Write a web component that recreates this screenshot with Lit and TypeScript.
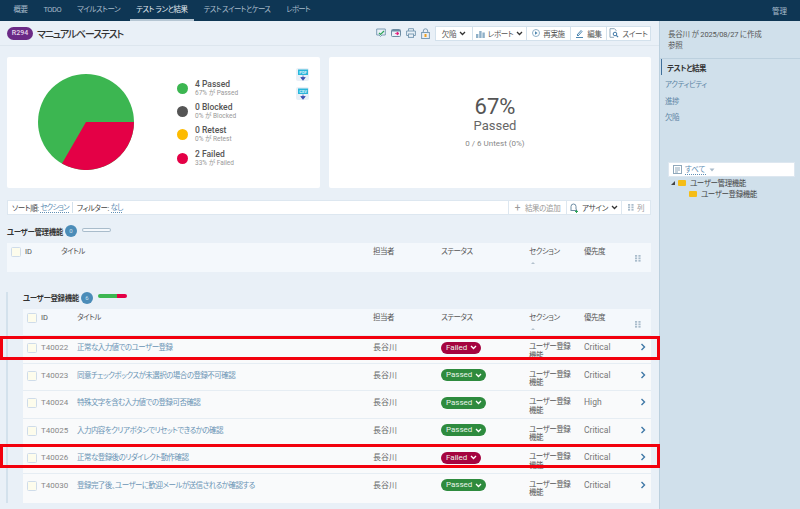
import { LitElement, css, html, svg } from "lit";
import { customElement } from "lit/decorators.js";

const TABS = ["概要", "TODO", "マイルストーン", "テスト ランと結果", "テスト スイートとケース", "レポート"];

const LEGEND = [
  { title: "4 Passed", sub: "67% が Passed", color: "#3cb651" },
  { title: "0 Blocked", sub: "0% が Blocked", color: "#555555" },
  { title: "0 Retest", sub: "0% が Retest", color: "#fdbb00" },
  { title: "2 Failed", sub: "33% が Failed", color: "#e40046" },
];

const ROWS = [
  { id: "T40022", title: "正常な入力値でのユーザー登録", status: "Failed", priority: "Critical" },
  { id: "T40023", title: "同意チェックボックスが未選択の場合の登録不可確認", status: "Passed", priority: "Critical" },
  { id: "T40024", title: "特殊文字を含む入力値での登録可否確認", status: "Passed", priority: "High" },
  { id: "T40025", title: "入力内容をクリアボタンでリセットできるかの確認", status: "Passed", priority: "Critical" },
  { id: "T40026", title: "正常な登録後のリダイレクト動作確認", status: "Failed", priority: "Critical" },
  { id: "T40030", title: "登録完了後、ユーザーに歓迎メールが送信されるか確認する", status: "Passed", priority: "Critical" },
];

const chevronDown = (color = "#333") => html`<svg class="chev" width="7" height="5" viewBox="0 0 7 5">
  <path d="M1 1l2.5 2.5L6 1" fill="none" stroke=${color} stroke-width="1.3" />
</svg>`;

const columnsIcon = svg`<rect x="0" y="0" width="2.5" height="2.5" /><rect x="4" y="0" width="2.5" height="2.5" />
  <rect x="0" y="3.5" width="2.5" height="2.5" /><rect x="4" y="3.5" width="2.5" height="2.5" />
  <rect x="0" y="7" width="2.5" height="2.5" /><rect x="4" y="7" width="2.5" height="2.5" />`;

const exportIcon = (label: string) => html`<div class="export">
  <svg width="14" height="14" viewBox="0 0 14 14">
    <rect x="2" y="1.5" width="10" height="5.5" fill="#2bb6da" />
    <text x="7" y="5.8" font-size="4" font-weight="700" text-anchor="middle" fill="#dff4fa" font-family="Roboto, sans-serif">${label}</text>
    <path d="M7 7.5v3.5M4.8 9.5L7 12.3l2.2-2.8z" stroke="#3a4fb0" fill="#3a4fb0" stroke-width=".8" />
  </svg>
</div>`;

@customElement("app-root")
export class AppRoot extends LitElement {
  private renderHead() {
    return html`
      <div class="table-head cols">
        <span class="check"></span>
        <span class="latin">ID</span>
        <span>タイトル</span>
        <span>担当者</span>
        <span>ステータス</span>
        <span class="sort-col">セクション<i class="caret"></i></span>
        <span>優先度</span>
        <svg class="col-toggle" width="6" height="7" viewBox="0 0 7 10" preserveAspectRatio="none" fill="#a9bccb">${columnsIcon}</svg>
      </div>
    `;
  }

  private renderRow(row: (typeof ROWS)[number]) {
    return html`
      <div class="row cols">
        <span class="check"></span>
        <span class="id">${row.id}</span>
        <span class="title-link">${row.title}</span>
        <span class="owner">長谷川</span>
        <span><span class="pill ${row.status.toLowerCase()}">${row.status}${chevronDown("#fff")}</span></span>
        <span class="section-cell">ユーザー登録<br />機能</span>
        <span class="prio">${row.priority}</span>
        <svg class="go" width="6" height="8" viewBox="0 0 6 8">
          <path d="M1.5 1l3 3-3 3" fill="none" stroke="#3f77a6" stroke-width="1.4" />
        </svg>
      </div>
    `;
  }

  render() {
    return html`
      <nav class="topbar">
        <div class="tabs">
          ${TABS.map((t, i) => html`<span class="tab ${i === 3 ? "active" : ""}">${t}</span>`)}
        </div>
        <span class="admin">管理</span>
      </nav>
      <div class="layout">
        <main class="main">
          <header class="titlebar">
            <span class="run-badge">R294</span>
            <h1>マニュアルベーステスト</h1>
            <div class="tool-icons">
              <svg width="10" height="10" viewBox="0 0 10 10">
                <path d="M.7 1h8.6v6H6L4.5 8.5 3 7H.7z" fill="none" stroke="#7d9db5" />
                <path d="M3 5l1.5 1.5L8 3" fill="none" stroke="#2fa35a" stroke-width="1.2" />
              </svg>
              <svg width="10" height="10" viewBox="0 0 10 10">
                <rect x=".5" y="1.5" width="9" height="7" rx="1" fill="none" stroke="#6d8ca3" />
                <rect x="1" y="2" width="8" height="1.5" fill="#6d8ca3" />
                <path d="M4 5.5h3M6 4l2 1.5L6 7z" stroke="#e5187a" fill="#e5187a" stroke-width=".7" />
              </svg>
              <svg width="10" height="10" viewBox="0 0 10 10" fill="none" stroke="#7d9db5">
                <path d="M2.5 3V.7h5V3M2.5 7.5H.6V3h8.8v4.5H7.5" />
                <rect x="2.5" y="6" width="5" height="3.4" />
              </svg>
              <svg width="9" height="11" viewBox="0 0 9 11" fill="none" stroke="#7d9db5">
                <path d="M2.3 4.5V3a2.2 2.2 0 014.4 0v1.5" />
                <rect x=".6" y="4.5" width="7.8" height="6" />
                <rect x="3.5" y="6" width="2" height="3" fill="#f0a020" stroke="none" />
              </svg>
            </div>
            <div class="btn-group">
              <span class="btn" style="width:37px">欠陥${chevronDown()}</span>
              <span class="btn" style="width:54px">
                <svg width="9" height="9" viewBox="0 0 9 9" fill="#8fb0c8">
                  <rect x="0" y="5" width="2.4" height="4" /><rect x="3.2" y="2" width="2.4" height="7" /><rect x="6.4" y="3.5" width="2.4" height="5.5" />
                </svg>
                レポート${chevronDown()}
              </span>
              <span class="btn" style="width:44px">
                <svg width="8" height="8" viewBox="0 0 8 8">
                  <circle cx="4" cy="4" r="3.5" fill="none" stroke="#8fb0c8" />
                  <path d="M3 2.3L5.6 4 3 5.7z" fill="#4d86b0" />
                </svg>
                再実施
              </span>
              <span class="btn" style="width:36px">
                <svg width="9" height="9" viewBox="0 0 9 9">
                  <path d="M2 6l4-4.5 1 1L3 7zM1 8.5h7" fill="none" stroke="#4d86b0" />
                </svg>
                編集
              </span>
              <span class="btn" style="width:43px">
                <svg width="10" height="10" viewBox="0 0 10 10" fill="none">
                  <path d="M1 .7h4.5L7 2.2v1M1 .7v8.6h4" stroke="#8fa8bb" />
                  <circle cx="6" cy="6" r="1.8" stroke="#3f77a6" />
                  <path d="M7.3 7.3l1.8 1.8" stroke="#3f77a6" stroke-width="1.2" />
                </svg>
                スイート
              </span>
            </div>
          </header>

          <section class="cards">
            <div class="card chart-card">
              <svg class="pie" width="96" height="96" viewBox="0 0 96 96">
                <circle cx="48" cy="48" r="48" fill="#3cb651" />
                <path d="M48 48H96A48 48 0 0 1 24 89.6Z" fill="#e40046" />
              </svg>
              <ul class="legend">
                ${LEGEND.map(
                  (l) => html`<li>
                    <span class="dot" style="background:${l.color}"></span>
                    <div>
                      <div class="legend-title">${l.title}</div>
                      <div class="legend-sub">${l.sub}</div>
                    </div>
                  </li>`,
                )}
              </ul>
              <div class="exports">${exportIcon("PDF")}${exportIcon("CSV")}</div>
            </div>
            <div class="card summary-card">
              <div class="pct">67%</div>
              <div class="pct-label">Passed</div>
              <div class="pct-sub">0 / 6 Untest (0%)</div>
            </div>
          </section>

          <div class="filterbar">
            <span>ソート順:</span><a>セクション</a>
            <span class="sep"></span>
            <span>フィルター:</span><a>なし</a>
            <div class="filter-actions">
              <span class="fbtn muted" style="width:58px"><b class="plus">+</b>結果の追加</span>
              <span class="fbtn" style="width:55px">
                <svg width="9" height="10" viewBox="0 0 9 10" fill="none">
                  <path d="M1 8V3.5a2.5 2.5 0 015 0V6l.8 1.5H1" stroke="#6d8ca3" />
                  <path d="M6.5 7v3M5 8.5h3" stroke="#2fa35a" />
                </svg>
                アサイン${chevronDown()}
              </span>
              <span class="fbtn muted" style="width:29px">
                <svg width="6" height="7" viewBox="0 0 7 10" preserveAspectRatio="none" fill="#a9bccb">${columnsIcon}</svg>
                列
              </span>
            </div>
          </div>

          <section class="group first">
            <div class="group-head">
              <h2>ユーザー管理機能</h2>
              <span class="count">0</span>
              <span class="bar empty"></span>
            </div>
            ${this.renderHead()}
          </section>

          <section class="group nested">
            <div class="group-head">
              <h2>ユーザー登録機能</h2>
              <span class="count">6</span>
              <span class="bar"><i class="bar-pass"></i><i class="bar-fail"></i></span>
            </div>
            ${this.renderHead()}
            ${ROWS.map((r) => this.renderRow(r))}
          </section>
        </main>

        <aside class="side">
          <div class="side-info">
            <div>長谷川 が 2025/08/27 に作成</div>
            <div>参照</div>
          </div>
          <ul class="side-nav">
            <li class="on">テストと結果</li>
            <li>アクティビティ</li>
            <li>進捗</li>
            <li>欠陥</li>
          </ul>
          <div class="tree-filter">
            <svg width="9" height="9" viewBox="0 0 9 9" fill="none" stroke="#8fa8bb">
              <rect x=".5" y=".5" width="8" height="8" />
              <path d="M2 3h5M2 5h5M2 7h3" />
            </svg>
            <a>すべて</a>
            <svg width="6" height="4" viewBox="0 0 6 4"><path d="M.5.5h5L3 3.5z" fill="#a9bccb" /></svg>
          </div>
          <div class="tree-item">
            <svg width="4" height="4" viewBox="0 0 4 4"><path d="M4 0v4H0z" fill="#444" /></svg>
            <span class="folder"></span>ユーザー管理機能
          </div>
          <div class="tree-item child"><span class="folder"></span>ユーザー登録機能</div>
        </aside>
      </div>
      <div class="mark" style="top:336px"></div>
      <div class="mark" style="top:444px"></div>
    `;
  }

  static styles = css`
    :host {
      display: block;
      position: relative;
      width: 800px;
      height: 509px;
      overflow: hidden;
      background: #e9f0f7;
      color: #555;
      font-family: Roboto, "Noto Sans CJK JP", sans-serif;
      font-size: 7.5px;
      font-feature-settings: "palt";
    }
    h1,
    h2,
    ul {
      margin: 0;
      padding: 0;
      list-style: none;
    }
    .topbar {
      height: 21px;
      background: #0e3654;
      display: flex;
      justify-content: space-between;
      color: #a9bccb;
    }
    .tabs {
      display: flex;
      gap: 3px;
      padding-left: 7px;
    }
    .tab {
      padding: 0 6.5px;
      line-height: 19px;
      height: 19px;
      border-bottom: 2px solid transparent;
      white-space: nowrap;
      letter-spacing: -0.5px;
    }
    .tab:nth-child(5) {
      letter-spacing: -0.7px;
    }
    .tab:nth-child(6) {
      letter-spacing: -0.9px;
    }
    .tab.active {
      color: #e2eaf0;
      border-bottom-color: #b6c6d3;
    }
    .admin {
      line-height: 23px;
      padding-right: 13px;
    }
    .layout {
      display: grid;
      grid-template-columns: 659px 141px;
      height: 488px;
    }
    .main {
      min-width: 0;
    }
    .titlebar {
      height: 24px;
      border-bottom: 1px solid #dde6ee;
      display: flex;
      align-items: center;
      padding: 0 8px 0 7px;
    }
    .run-badge {
      width: 26px;
      height: 13px;
      border-radius: 7px;
      background: #6b2a86;
      color: #e6d8ec;
      font-size: 7px;
      font-weight: 500;
      text-align: center;
      line-height: 13px;
    }
    h1 {
      margin-left: 4px;
      font-size: 10px;
      font-weight: 500;
      color: #333;
      letter-spacing: -1.2px;
    }
    .tool-icons {
      margin-left: auto;
      display: flex;
      align-items: center;
      gap: 5px;
      margin-right: 5px;
    }
    .btn-group {
      display: flex;
      height: 13px;
      background: #fff;
      border: 1px solid #d3e1ec;
    }
    .btn {
      display: flex;
      align-items: center;
      justify-content: center;
      gap: 3px;
      box-sizing: border-box;
      border-right: 1px solid #d3e1ec;
      color: #555;
      letter-spacing: -0.3px;
      white-space: nowrap;
    }
    .btn:last-child {
      border-right: 0;
    }
    .cards {
      display: grid;
      grid-template-columns: 313px 322px;
      gap: 9px;
      margin: 11px 8px 0 7px;
    }
    .card {
      height: 131px;
      background: #fff;
      border-radius: 2px;
    }
    .chart-card {
      display: flex;
      align-items: flex-start;
      padding: 17px 0 0 31px;
      box-sizing: border-box;
    }
    .pie {
      flex: none;
    }
    .legend {
      margin: 5px 0 0 43px;
      display: grid;
      gap: 3.6px;
    }
    .legend li {
      display: flex;
      align-items: center;
      gap: 7px;
      height: 19.5px;
    }
    .dot {
      width: 11px;
      height: 11px;
      border-radius: 50%;
    }
    .legend-title {
      font-size: 8.5px;
      font-weight: 500;
      line-height: 10px;
      color: #555;
    }
    .legend-sub {
      font-size: 6.5px;
      line-height: 9px;
      color: #999;
    }
    .exports {
      margin: -6px 0 0 auto;
      padding-right: 11px;
      display: grid;
      gap: 6px;
    }
    .export {
      width: 13px;
      height: 13px;
      background: #e9f0f7;
      border-radius: 2px;
      overflow: hidden;
    }
    .summary-card {
      display: flex;
      flex-direction: column;
      align-items: center;
      padding: 38px 0 0 10px;
      box-sizing: border-box;
    }
    .pct {
      font-size: 22px;
      line-height: 24px;
      color: #555;
    }
    .pct-label {
      font-size: 13px;
      line-height: 14px;
      color: #666;
    }
    .pct-sub {
      margin-top: 6px;
      font-size: 8px;
      color: #888;
    }
    .filterbar {
      margin: 12px 8px 0 7px;
      height: 15px;
      box-sizing: border-box;
      background: #fff;
      border: 1px solid #dde7f0;
      display: flex;
      align-items: center;
      gap: 1.5px;
      padding-left: 4px;
      color: #444;
      letter-spacing: -0.4px;
    }
    .filterbar a,
    .tree-filter a {
      color: #5f8fb5;
      border-bottom: 1px dotted #5f8fb5;
      line-height: 9px;
    }
    .filterbar a {
      letter-spacing: -0.9px;
    }
    .sep {
      width: 1px;
      height: 11px;
      background: #d3e1ec;
      margin: 0 2px;
    }
    .filter-actions {
      margin-left: auto;
      display: flex;
      height: 100%;
    }
    .fbtn {
      display: flex;
      align-items: center;
      justify-content: center;
      gap: 3px;
      box-sizing: border-box;
      border-left: 1px solid #dde7f0;
      white-space: nowrap;
    }
    .fbtn.muted {
      color: #999;
    }
    .plus {
      font-weight: 400;
      font-size: 10px;
      line-height: 10px;
      margin-right: 2px;
    }
    .group.first {
      margin: 9px 8px 0 7px;
    }
    .group.nested {
      margin: 20px 8px 0 6px;
      border-left: 2px solid #d3e1ec;
      padding-left: 15px;
    }
    .group-head {
      display: flex;
      align-items: center;
      box-sizing: border-box;
      height: 17px;
      padding-bottom: 6px;
    }
    .first .group-head {
      height: 19px;
      padding-bottom: 5px;
    }
    h2 {
      font-size: 7.5px;
      font-weight: 700;
      color: #333;
      width: 58px;
      letter-spacing: -0.4px;
      white-space: nowrap;
    }
    .count {
      width: 12px;
      height: 12px;
      border-radius: 50%;
      background: #4b8cb8;
      color: #cfe2ef;
      font-size: 6px;
      line-height: 12px;
      text-align: center;
    }
    .bar {
      margin: -3px 0 0 5px;
      width: 29px;
      height: 4px;
      border-radius: 2px;
      display: flex;
      overflow: hidden;
    }
    .bar.empty {
      background: #f4f8fc;
      box-shadow: inset 0 0 0 1px #a9bccb;
    }
    .bar-pass {
      flex: 2;
      background: #3cb651;
    }
    .bar-fail {
      flex: 1;
      background: #e40046;
    }
    .cols {
      display: grid;
      grid-template-columns: 14px 36px 1fr 68px 88px 55px 51px 16px;
      padding-left: 4px;
    }
    .table-head {
      height: 29px;
      box-sizing: border-box;
      padding-top: 4px;
      background: #f4f8fc;
      color: #555;
      line-height: 10px;
      letter-spacing: -0.5px;
    }
    .nested .table-head {
      height: 26px;
    }
    .latin {
      letter-spacing: 0;
    }
    .sort-col {
      display: block;
    }
    .caret {
      display: block;
      margin: 5px 0 0 2px;
      width: 0;
      height: 0;
      border: 2px solid transparent;
      border-top: 0;
      border-bottom: 2px solid #b3c2ce;
    }
    .col-toggle {
      margin-top: 8px;
      justify-self: start;
    }
    .check {
      width: 8px;
      height: 8px;
      background: #fdfcec;
      border: 1px solid #cfdcea;
      border-radius: 1.5px;
    }
    .row {
      height: 27.6px;
      box-sizing: border-box;
      padding-top: 7px;
      background: #f9fafb;
      border-top: 1px solid #e6edf3;
      line-height: 9px;
      color: #666;
      overflow: hidden;
    }
    .row:last-child {
      height: 30px;
    }
    .id {
      color: #888;
      font-size: 8px;
    }
    .title-link {
      color: #6a94b5;
      letter-spacing: -0.55px;
      white-space: nowrap;
    }
    .owner {
      font-size: 8px;
    }
    .prio {
      color: #777;
      font-size: 8.5px;
    }
    .section-cell {
      color: #555;
      line-height: 8.5px;
      letter-spacing: -0.5px;
      white-space: nowrap;
    }
    .pill {
      display: inline-flex;
      align-items: center;
      gap: 3px;
      height: 12px;
      margin-top: -1.5px;
      padding: 0 4px 0 5px;
      border-radius: 6px;
      color: #e8f3ea;
      font-size: 8px;
      line-height: 12px;
      box-sizing: border-box;
      vertical-align: top;
    }
    .pill.passed {
      background: #2e8b3e;
    }
    .pill.failed {
      background: #a5043f;
    }
    .go {
      justify-self: start;
      margin-left: 5px;
    }
    .side {
      background: #d0e0eb;
      border-left: 1px solid #bcd0de;
      box-sizing: border-box;
      color: #555;
    }
    .side-info {
      height: 38px;
      box-sizing: border-box;
      padding: 8px 0 0 8px;
      line-height: 11px;
      letter-spacing: -0.2px;
      border-bottom: 1px solid #bcd0de;
    }
    .side-nav li {
      height: 16.3px;
      line-height: 19px;
      padding-left: 5px;
      color: #5e86a5;
      letter-spacing: -0.4px;
    }
    .side-nav li.on {
      box-sizing: border-box;
      border-left: 1px solid #3f6f9a;
      color: #333;
      font-weight: 700;
      padding-left: 5px;
      margin-left: 1px;
    }
    .tree-filter {
      margin: 38px 5px 0 8px;
      height: 15px;
      box-sizing: border-box;
      background: #fff;
      border: 1px solid #dde7f0;
      display: flex;
      align-items: center;
      gap: 3px;
      padding-left: 4px;
    }
    .tree-item {
      display: flex;
      align-items: center;
      gap: 3px;
      height: 11px;
      margin-left: 11px;
      color: #444;
      letter-spacing: -0.4px;
      white-space: nowrap;
    }
    .tree-item.child {
      margin-left: 29px;
    }
    .folder {
      width: 8px;
      height: 6px;
      background: #f5bd17;
      border-radius: 1px;
      margin-right: 1px;
    }
    .mark {
      position: absolute;
      left: 0;
      width: 660px;
      height: 24px;
      box-sizing: border-box;
      border: 3px solid #f2000d;
      pointer-events: none;
    }
  `;
}

declare global {
  interface HTMLElementTagNameMap {
    "app-root": AppRoot;
  }
}
